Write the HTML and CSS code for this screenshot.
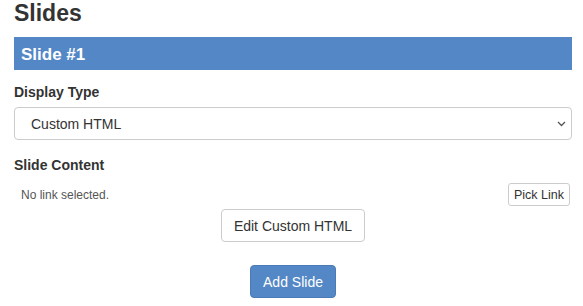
FILE: index.html
```html
<!DOCTYPE html>
<html lang="en">
  <head>
    <meta charset="UTF-8" />
    <meta name="viewport" content="width=device-width, initial-scale=1.0" />
    <title>Slides</title>
    <link rel="stylesheet" href="styles.css">
  </head>
  <body>
    <div class="container">
      <h1>Slides</h1>
      <div class="slideHeader">Slide #1</div>

      <label class="fieldLabel" for="displayType">Display Type</label>
      <div class="selectWrap">
        <select id="displayType" class="selectInput">
          <option>Custom HTML</option>
          <option>Image</option>
          <option>Link</option>
        </select>
        <svg class="chevron" width="9" height="6" viewBox="0 0 9 6">
          <path d="M1 1 L4.5 4.5 L8 1" fill="none" stroke="#555" stroke-width="1.3" />
        </svg>
      </div>

      <div class="fieldLabel">Slide Content</div>
      <div class="linkRow">
        <span class="linkText">No link selected.</span>
        <button class="btnSmall">Pick Link</button>
      </div>

      <div class="centerRow">
        <button class="btn">Edit Custom HTML</button>
      </div>
      <div class="centerRow addRow">
        <button class="btn btnPrimary">Add Slide</button>
      </div>
    </div>
  </body>
</html>
```

FILE: styles.css
```css
body {
  margin: 0;
  background: #fff;
  color: #333;
  font-family: 'Liberation Sans', Arial, sans-serif;
}

.container {
  padding: 0 11px 0 14px;
}

h1 {
  margin: 0;
  font-size: 23px;
  line-height: 26px;
  font-weight: bold;
  color: #333;
}

.slideHeader {
  margin-top: 11px;
  height: 33px;
  padding: 0 7px;
  background: #5487c5;
  color: #fff;
  font-size: 17px;
  font-weight: bold;
  line-height: 35px;
}

.fieldLabel {
  display: block;
  font-size: 14px;
  font-weight: bold;
  line-height: 20px;
  margin-top: 12px;
}

.selectWrap {
  position: relative;
  margin-top: 5px;
}

.selectInput {
  display: block;
  width: 100%;
  height: 33px;
  padding: 0 30px 0 16px;
  border: 1px solid #ccc;
  border-radius: 4px;
  background: #fff;
  color: #333;
  font-family: inherit;
  font-size: 14px;
  -webkit-appearance: none;
  appearance: none;
}

.chevron {
  position: absolute;
  right: 6px;
  top: 14px;
  pointer-events: none;
}

.selectWrap + .fieldLabel {
  margin-top: 15px;
}

.linkRow {
  display: flex;
  justify-content: space-between;
  align-items: center;
  margin-top: 8px;
  padding-left: 7px;
}

.linkText {
  font-size: 12px;
  color: #555;
}

.btnSmall {
  height: 23px;
  padding: 0 5px;
  margin-right: 2px;
  border: 1px solid #ccc;
  border-radius: 3px;
  background: #fff;
  color: #333;
  font-family: inherit;
  font-size: 12.5px;
  cursor: pointer;
}

.centerRow {
  display: flex;
  justify-content: center;
  margin-top: 3px;
}

.addRow {
  margin-top: 23px;
}

.btn {
  height: 33px;
  padding: 0 12px;
  border: 1px solid #ccc;
  border-radius: 4px;
  background: #fff;
  color: #333;
  font-family: inherit;
  font-size: 14px;
  cursor: pointer;
}

.btnPrimary {
  background: #5487c5;
  border-color: #4b7bb6;
  color: #fff;
}
```
